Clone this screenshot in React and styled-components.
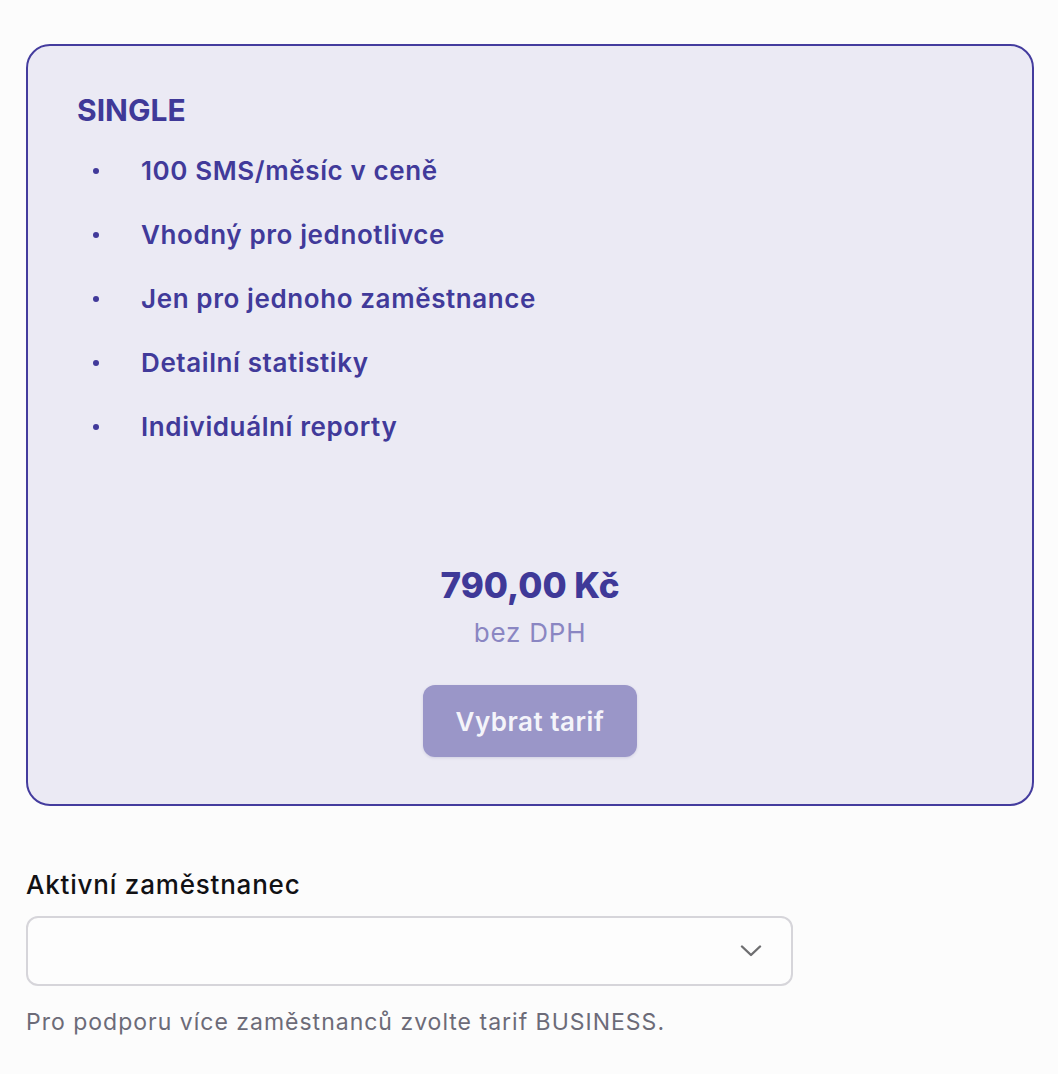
import styled, { createGlobalStyle } from 'styled-components'

const GlobalStyle = createGlobalStyle`
  * { box-sizing: border-box; }
  body {
    margin: 0;
    background: #fcfcfc;
    font-family: Inter, "Noto Sans", "Liberation Sans", sans-serif;
    -webkit-font-smoothing: antialiased;
  }
`

const features = [
  '100 SMS/měsíc v ceně',
  'Vhodný pro jednotlivce',
  'Jen pro jednoho zaměstnance',
  'Detailní statistiky',
  'Individuální reporty',
]

const App = () => {
  return (
    <>
      <GlobalStyle />
      <Page>
        <PlanCard>
          <PlanName>SINGLE</PlanName>
          <FeatureList>
            {features.map(f => (
              <Feature key={f}>
                <Dot />
                {f}
              </Feature>
            ))}
          </FeatureList>
          <PriceBlock>
            <Price>790,00 Kč</Price>
            <PriceNote>bez DPH</PriceNote>
            <SelectButton type="button">Vybrat tarif</SelectButton>
          </PriceBlock>
        </PlanCard>

        <Field>
          <Label>Aktivní zaměstnanec</Label>
          <SelectBox>
            <svg width="22" height="12" viewBox="0 0 22 12" fill="none">
              <polyline points="2,1.5 11,10 20,1.5" stroke="#6e6e70" strokeWidth="2.4" strokeLinecap="round" strokeLinejoin="round" />
            </svg>
          </SelectBox>
          <Hint>Pro podporu více zaměstnanců zvolte tarif BUSINESS.</Hint>
        </Field>
      </Page>
    </>
  )
}

const Page = styled.div`
  padding: 44px 24px 40px 26px;
`

const PlanCard = styled.div`
  border: 2px solid #443c9e;
  border-radius: 24px;
  background: #ebeaf4;
  padding: 46px 49px 47px;
  display: flex;
  flex-direction: column;
`

const PlanName = styled.h2`
  margin: 0;
  font-size: 30px;
  line-height: 36px;
  font-weight: 700;
  color: #3f3998;
`

const FeatureList = styled.ul`
  list-style: none;
  margin: 11px 0 0;
  padding: 0;
`

const Feature = styled.li`
  display: flex;
  align-items: center;
  padding: 12px 0;
  line-height: 40px;
  font-size: 26px;
  font-weight: 600;
  letter-spacing: 0.6px;
  color: #413a9a;
`

const Dot = styled.span`
  width: 6px;
  height: 6px;
  border-radius: 50%;
  background: #413a9a;
  margin-left: 16px;
  margin-right: 42px;
  flex-shrink: 0;
`

const PriceBlock = styled.div`
  margin-top: 104px;
  display: flex;
  flex-direction: column;
  align-items: center;
`

const Price = styled.div`
  font-size: 35px;
  line-height: 44px;
  font-weight: 800;
  color: #3f3998;
`

const PriceNote = styled.div`
  margin-top: 10px;
  font-size: 26px;
  line-height: 32px;
  letter-spacing: 0.8px;
  color: #8a86c2;
`

const SelectButton = styled.button`
  margin-top: 36px;
  width: 214px;
  height: 72px;
  border: none;
  border-radius: 12px;
  background: #9a96c8;
  color: #f4f4fa;
  font-family: inherit;
  font-size: 26px;
  font-weight: 600;
  letter-spacing: 0.5px;
  box-shadow: 0 1px 3px rgba(60, 55, 120, 0.15);
`

const Field = styled.div`
  margin-top: 63px;
  width: 767px;
`

const Label = styled.div`
  font-size: 26px;
  line-height: 32px;
  font-weight: 500;
  letter-spacing: 0.8px;
  color: #111114;
`

const SelectBox = styled.div`
  margin-top: 15px;
  height: 70px;
  border: 2px solid #d6d5da;
  border-radius: 12px;
  background: #fdfdfd;
  display: flex;
  align-items: center;
  justify-content: flex-end;
  padding-right: 29px;
`

const Hint = styled.div`
  margin-top: 21px;
  font-size: 23px;
  line-height: 30px;
  letter-spacing: 1px;
  color: #6c6b78;
`

export default App
